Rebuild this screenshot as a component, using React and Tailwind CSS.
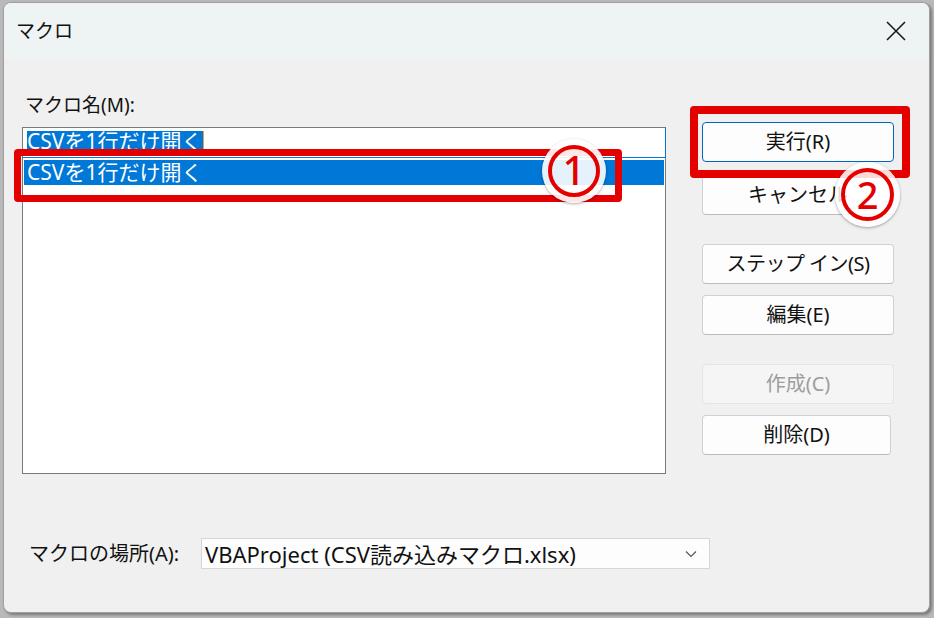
import React from "react";

const font = { fontFamily: "'Noto Sans', 'Noto Sans CJK JP', sans-serif" };

function Btn({ children, primary, disabled, className = "" }) {
  let cls =
    "h-[40px] w-[192px] flex items-center justify-center rounded-[4px] text-[20px] ";
  if (primary) cls += "bg-[#fdfdfd] border border-[#0067c0] text-[#111]";
  else if (disabled) cls += "bg-[#f5f5f5] border border-[#e5e5e5] text-[#9d9d9d]";
  else cls += "bg-[#fdfdfd] border border-[#d0d0d0] border-b-[#bcbcbc] text-[#111]";
  return <div className={cls + " " + className}>{children}</div>;
}

export default function App() {
  return (
    <div className="w-[934px] h-[618px] bg-[#b9b9b9] overflow-hidden pt-[2px] pl-[3px]" style={font}>
      <div className="relative w-[927px] h-[611px] rounded-[8px] overflow-hidden flex flex-col bg-[#f0f0f0] shadow-[2px_2px_3px_rgba(0,0,0,0.35)] border border-[#a0a0a0]">
        {/* title bar */}
        <div className="h-[56px] bg-[#eef3f3] flex items-center justify-between pl-[12px] pr-[18px] shrink-0">
          <span className="text-[19px] text-[#111] leading-none">マクロ</span>
          <svg width="22" height="22" viewBox="0 0 22 22" className="mr-[4px]">
            <path d="M2 2 L20 20 M20 2 L2 20" stroke="#1a1a1a" strokeWidth="1.6" />
          </svg>
        </div>
        {/* body */}
        <div className="flex-1 flex flex-col pt-[34px] pl-[18px]">
          <div className="flex items-start gap-[36px]">
            <div className="w-[644px] flex flex-col">
              <div className="ml-[3px] text-[19px] leading-[25px] text-[#111] h-[25px]">マクロ名(M):</div>
              <div className="mt-[9px] h-[31px] bg-white border border-[#7a7a7a] border-r-[#0078d4] border-b-[#0078d4] flex items-center pl-[4px]">
                <span className="bg-[#0078d7] text-white text-[21px] leading-[20px] h-[20px] pr-[1px] border-r border-[#f59b2e] -mt-[3px]">
                  CSVを1行だけ開く
                </span>
              </div>
              <div className="h-[316px] bg-white border border-[#7a7a7a] border-t-0 pt-[2px] px-[1px]">
                <div className="h-[25px] bg-[#0078d7] text-white text-[21px] leading-[25px] pl-[3px]">
                  CSVを1行だけ開く
                </div>
              </div>
            </div>
            <div className="mt-[29px] flex flex-col">
              <Btn primary>実行(R)</Btn>
              <Btn className="mt-[13px] h-[38px]">キャンセル</Btn>
              <Btn className="mt-[29px] tracking-[-0.5px]">ステップ イン(S)</Btn>
              <Btn className="mt-[11px]">編集(E)</Btn>
              <Btn disabled className="mt-[29px]">作成(C)</Btn>
              <Btn className="mt-[11px] !w-[189px]">削除(D)</Btn>
            </div>
          </div>
          <div className="mt-[64px] flex items-center">
            <span className="ml-[7px] w-[172px] text-[20px] text-[#111]">マクロの場所(A):</span>
            <div className="w-[509px] h-[31px] bg-[#fdfdfd] border border-[#d6d6d6] flex items-center justify-between pl-[3px] pr-[12px]">
              <span className="text-[22px] leading-none text-[#111]">VBAProject (CSV読み込みマクロ.xlsx)</span>
              <svg width="12" height="8" viewBox="0 0 12 8">
                <path d="M1 1.5 L6 6.5 L11 1.5" stroke="#555" strokeWidth="1.2" fill="none" />
              </svg>
            </div>
          </div>
        </div>

        {/* annotations */}
        <div className="absolute left-[10px] top-[146px] w-[608px] h-[53px] border-[7px] border-[#e50000] rounded-[4px]" />
        <div className="absolute left-[686px] top-[103px] w-[220px] h-[72px] border-[8px] border-[#e50000] rounded-[4px]" />
        <div className="absolute left-[538px] top-[136px] w-[64px] h-[64px] rounded-full bg-white/90 shadow-[0_1px_3px_rgba(0,0,0,0.35)] flex items-center justify-center">
          <div className="w-[52px] h-[52px] rounded-full border-[4px] border-[#e50000] flex items-center justify-center text-[#e50000] text-[40px] font-medium leading-none pb-[2px]">
            1
          </div>
        </div>
        <div className="absolute left-[831px] top-[159px] w-[65px] h-[65px] rounded-full bg-white/85 shadow-[0_1px_3px_rgba(0,0,0,0.35)] flex items-center justify-center">
          <div className="w-[53px] h-[53px] rounded-full border-[4px] border-[#e50000] flex items-center justify-center text-[#e50000] text-[38px] font-medium leading-none pb-[2px]">
            2
          </div>
        </div>
      </div>
    </div>
  );
}
